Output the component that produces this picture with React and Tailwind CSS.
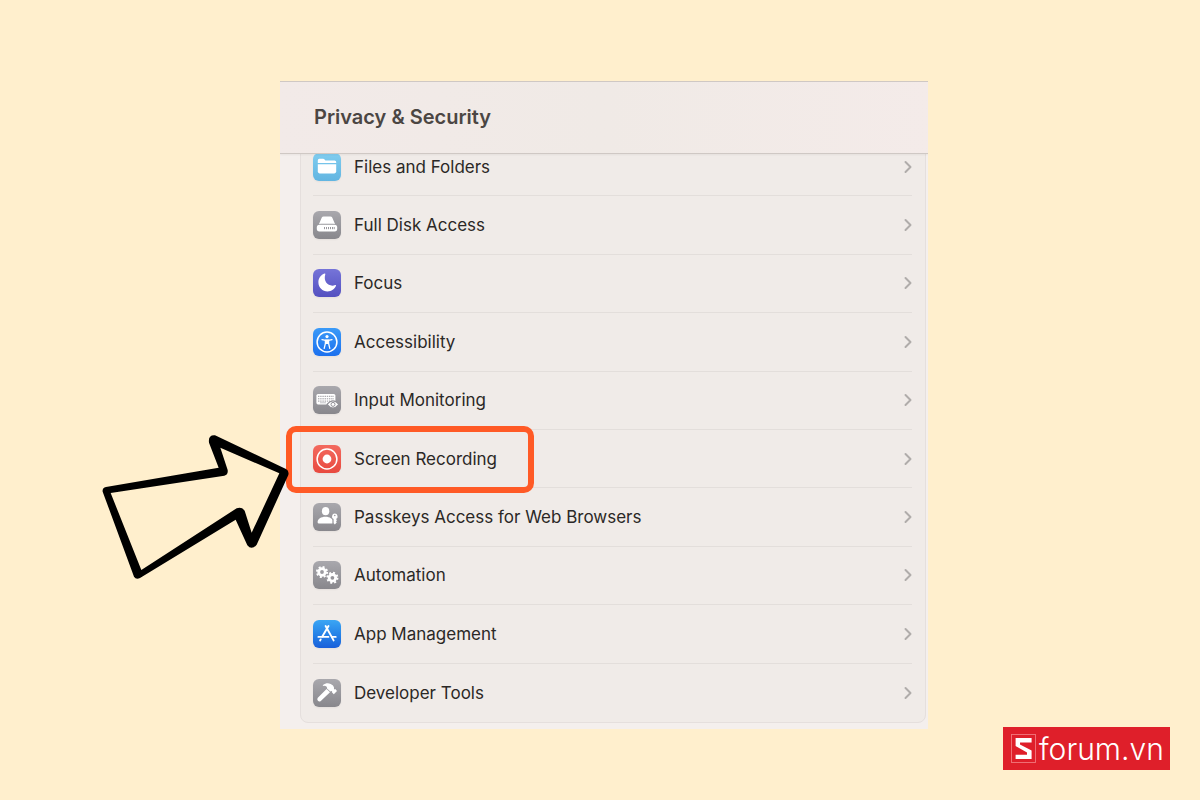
import React from 'react';
import { ChevronRight } from 'lucide-react';

const FolderIcon = () => (
  <svg viewBox="0 0 28 28" className="w-7 h-7" fill="#fff">
    <path d="M4.8 10V7.4Q4.8 5.8 6.4 5.8H10Q11 5.8 11.6 6.5L12.4 7.4H21.6Q23.2 7.4 23.2 9V10Z" />
    <path d="M4.8 11.2H23.2V18.6Q23.2 20.4 21.4 20.4H6.6Q4.8 20.4 4.8 18.6Z" />
  </svg>
);

const DiskIcon = () => (
  <svg viewBox="0 0 28 28" className="w-7 h-7" fill="#fff">
    <path d="M8.8 6.6Q9.3 5.4 10.6 5.4H17.4Q18.7 5.4 19.2 6.6L22 13Q21 12.7 20 12.7H8Q7 12.7 6 13Z" />
    <rect x="3.8" y="13.8" width="20.4" height="6.6" rx="2.6" />
    <path d="M11.5 16V18.2M13.5 16V18.2M15.5 16V18.2M17.5 16V18.2M19.5 16V18.2M21.2 16V18.2" stroke="#8d8c92" strokeWidth="0.9" />
  </svg>
);

const MoonIcon = () => (
  <svg viewBox="0 0 28 28" className="w-7 h-7" fill="#fff">
    <path d="M11.6 4.6C8 5.9 5.4 9.2 5.4 13.2C5.4 18.4 9.5 22.4 14.6 22.4C18.6 22.4 21.6 20.2 23 16.8C23.2 16.2 22.8 15.9 22.2 16.1C16.4 18.3 9.8 13.4 12.3 5.3C12.5 4.7 12.2 4.4 11.6 4.6Z" />
  </svg>
);

const AccessibilityIcon = () => (
  <svg viewBox="0 0 28 28" className="w-7 h-7" fill="none" stroke="#fff">
    <circle cx="14" cy="14" r="9.9" strokeWidth="1.5" />
    <circle cx="14" cy="8.6" r="1.6" fill="#fff" stroke="none" />
    <path d="M9 11.7L12.6 12.4H15.4L19 11.7" strokeWidth="1.3" strokeLinecap="round" />
    <path d="M12.4 12.2H15.6V15.4L16.8 20.4M12.4 12.2V15.4L11.2 20.4" strokeWidth="1.3" strokeLinecap="round" />
    <path d="M12.4 12.2H15.6V16H12.4Z" fill="#fff" stroke="none" />
  </svg>
);

const KeyboardIcon = () => (
  <svg viewBox="0 0 28 28" className="w-7 h-7">
    <rect x="3.4" y="8" width="19" height="10.4" rx="1.6" fill="#fff" />
    <path d="M5 10.3H21M5 12.8H21M5 15.1H17" stroke="#99989d" strokeWidth="1" strokeDasharray="1.4 0.8" />
    <path d="M7 16.8H13" stroke="#99989d" strokeWidth="0.6" />
    <path d="M14 18.4Q19.9 11.2 26 18.4Q19.9 25.6 14 18.4Z" fill="#fff" stroke="#929197" strokeWidth="1.2" />
    <circle cx="20" cy="18.4" r="2" fill="#fff" stroke="#929197" strokeWidth="1" />
  </svg>
);

const RecordIcon = () => (
  <svg viewBox="0 0 28 28" className="w-7 h-7">
    <circle cx="14" cy="14" r="9.9" fill="none" stroke="#fff" strokeWidth="1.5" />
    <circle cx="14" cy="14" r="4.4" fill="#fff" />
  </svg>
);

const PasskeyIcon = () => (
  <svg viewBox="0 0 28 28" className="w-7 h-7" fill="#fff">
    <ellipse cx="12.6" cy="8.2" rx="3.7" ry="4.1" />
    <path d="M4.6 19.2C4.6 15.8 8 13.7 12.4 13.7C14.8 13.7 16.6 14.2 17.8 15.2Q19.2 16 19.4 17V20.6H6Q4.6 20.6 4.6 19.2Z" />
    <path fillRule="evenodd" d="M21.8 10.6A2.9 2.9 0 0 1 23 16.1L24 17.2L23 18.2L23.8 19.2L21.9 21.4L20.6 20.2V16.1A2.9 2.9 0 0 1 21.8 10.6ZM21.8 11.7A0.8 0.8 0 1 0 21.8 13.3A0.8 0.8 0 1 0 21.8 11.7Z" />
  </svg>
);

const Gear = ({ cx, cy }) => (
  <g transform={`translate(${cx} ${cy})`} fill="none" stroke="#fff">
    <circle r="3.3" strokeWidth="2.8" />
    <circle r="5.1" strokeWidth="1.9" strokeDasharray="2 2.005" />
  </g>
);

const GearsIcon = () => (
  <svg viewBox="0 0 28 28" className="w-7 h-7">
    <Gear cx={9} cy={11} />
    <Gear cx={19.4} cy={16.8} />
  </svg>
);

const AppStoreIcon = () => (
  <svg viewBox="0 0 28 28" className="w-7 h-7" fill="none" stroke="#fff" strokeWidth="1.9" strokeLinecap="round">
    <path d="M12.6 6L20.6 20.4" />
    <path d="M15.5 6L9.3 16.6" />
    <path d="M5.4 16.9H15.4M19.2 16.9H22.7" />
    <path d="M7.7 19.4L7.1 20.5" />
  </svg>
);

const HammerIcon = () => (
  <svg viewBox="0 0 28 28" className="w-7 h-7" fill="#fff">
    <path d="M13.6 9.9L17 13.3L7.8 21.9Q6.2 23 4.9 21.7Q3.6 20.3 4.8 18.8Z" />
    <path d="M10 5.9C13.3 3.2 17.6 3.8 20 6.6Q21.4 8.2 21 10L21.6 10.5L22.3 9.9L24 11.9L20.8 15.2L18.9 13.3L19.2 12.4L18.4 11.9L17.3 12.6L14 9.4C14.3 7.6 12.7 6.5 10.2 6.9Q9.4 6.6 10 5.9Z" />
  </svg>
);

const items = [
  { label: 'Files and Folders', icon: FolderIcon, tile: 'from-[#80cdef] to-[#62b5e1]' },
  { label: 'Full Disk Access', icon: DiskIcon, tile: 'from-[#a9a8ad] to-[#88878c]' },
  { label: 'Focus', icon: MoonIcon, tile: 'from-[#7674d8] to-[#5450c0]' },
  { label: 'Accessibility', icon: AccessibilityIcon, tile: 'from-[#3b9af8] to-[#1d70ee]' },
  { label: 'Input Monitoring', icon: KeyboardIcon, tile: 'from-[#a9a8ad] to-[#88878c]' },
  { label: 'Screen Recording', icon: RecordIcon, tile: 'from-[#f3695e] to-[#e8493f]', highlighted: true },
  { label: 'Passkeys Access for Web Browsers', icon: PasskeyIcon, tile: 'from-[#a9a8ad] to-[#88878c]' },
  { label: 'Automation', icon: GearsIcon, tile: 'from-[#a9a8ad] to-[#88878c]' },
  { label: 'App Management', icon: AppStoreIcon, tile: 'from-[#3ba6f4] to-[#1a5fda]' },
  { label: 'Developer Tools', icon: HammerIcon, tile: 'from-[#a9a8ad] to-[#88878c]' },
];

const SettingsRow = ({ item }) => {
  const Icon = item.icon;
  return (
    <li className="relative border-b border-[#e3dedb] last:border-b-0">
      <button type="button" className="w-full h-full flex items-center text-left cursor-pointer">
        <span className={`w-7 h-7 rounded-md bg-linear-to-b shadow-xs shrink-0 ${item.tile}`}>
          <Icon />
        </span>
        <span className="ml-[13px] flex-1 text-[17px] leading-6 text-[#2b2826]">{item.label}</span>
        <ChevronRight size={20} strokeWidth={2.4} className="-mr-1.5 text-[#b0acaa]" />
      </button>
      {item.highlighted && (
        <div className="absolute -left-[27px] -top-1 -bottom-1.5 w-[248px] border-[6px] border-[#ff5a26] rounded-[10px] pointer-events-none" />
      )}
    </li>
  );
};

const Arrow = () => (
  <svg viewBox="0 0 660 510" className="absolute -left-[190px] top-[339px] w-[220px] pointer-events-none">
    <path
      fillRule="evenodd"
      d="M48 201L386 143L357 68Q354 44 375 46L588 147Q598 153 595 165L500 374Q485 392 472 376L437 299L150 474Q138 480 132 470L38 215Q36 204 48 201Z
         M62 219L403 167Q415 164 413 150L391 83L568 160L485 338L464 272Q456 260 440 265L154 450Z"
    />
  </svg>
);

const Logo = () => (
  <a href="#" className="absolute right-[30px] bottom-[30px] h-[43px] w-[167px] pl-2 flex items-center bg-[#df1f2a] text-white">
    <svg viewBox="0 0 25 29" className="w-[25px] h-[29px]">
      <rect x="0.5" y="0.5" width="24" height="28" fill="none" stroke="#f2777c" strokeWidth="0.9" />
      <path d="M20.6 4V8.4H9V10.4L20.6 16.4V25H4.6V20.8H16V18.6L4.6 12V4Z" fill="#fff" />
    </svg>
    <span className="ml-[3px] text-[30px] leading-8 font-light">forum.vn</span>
  </a>
);

const App = () => {
  return (
    <div className="relative min-h-screen bg-[#ffefcd] flex items-center justify-center pl-2 pt-2.5 overflow-hidden font-['Inter',sans-serif]">
      <main className="relative w-[54vw] aspect-square">
        <section className="h-full flex flex-col overflow-hidden bg-[#f4efed]">
          <header className="relative z-10 shrink-0 h-[73px] px-[34px] pb-0.5 flex items-center border-y border-[#cfc8c4] bg-linear-to-r from-[#f2eae8] via-[#f0eae6] to-[#f4ebe9] shadow-xs">
            <h1 className="text-xl font-semibold text-[#4b4643]">Privacy &amp; Security</h1>
          </header>

          {/* List is scrolled a little way under the header */}
          <ul className="flex-1 -mt-[18px] mb-1.5 ml-5 mr-0.5 pt-px pl-3 pr-[13px] grid auto-rows-fr border border-[#e5dfdd] rounded-lg bg-[#f0ebe8]">
            {items.map((item) => (
              <SettingsRow key={item.label} item={item} />
            ))}
          </ul>
        </section>

        <Arrow />
      </main>

      <Logo />
    </div>
  );
};

export default App;
